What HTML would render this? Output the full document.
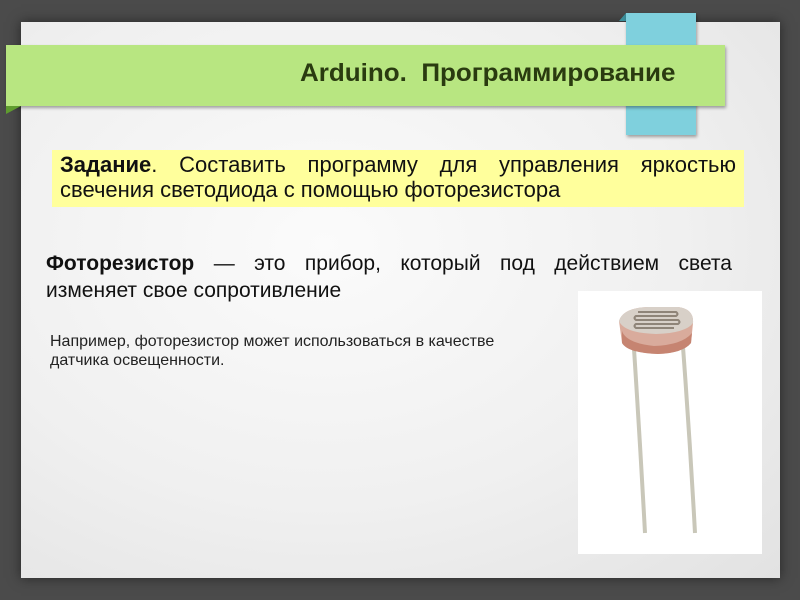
<!DOCTYPE html>
<html><head><meta charset="utf-8"><style>
body{margin:0;width:800px;height:600px;overflow:hidden;background:#4b4b4b;position:relative;font-family:"Liberation Sans",sans-serif}
.card{position:absolute;left:21px;top:22px;width:759px;height:556px;background:radial-gradient(ellipse at 40% 40%,#fbfbfb 0%,#f0f0f0 55%,#e2e2e2 100%);box-shadow:0 0 12px rgba(0,0,0,.5)}
.ribbon{position:absolute;left:626px;top:13px;width:70px;height:122px;background:#7fd0dd;box-shadow:1px 2px 3px rgba(0,0,0,.35)}
.ribfold{position:absolute;left:619px;top:13px;width:0;height:0;border-left:7px solid transparent;border-bottom:8px solid #3b8e9a}
.banner{position:absolute;left:6px;top:45px;width:719px;height:61px;background:#b8e681;box-shadow:1px 2px 3px rgba(0,0,0,.35)}
.bfold{position:absolute;left:6px;top:106px;width:0;height:0;border-left:15px solid #5f9c2f;border-bottom:8px solid transparent}
.title{position:absolute;left:300px;top:59px;font:bold 25px "Liberation Sans",sans-serif;color:#2a3b10;white-space:nowrap;transform-origin:0 0;transform:scaleX(1.04)}
.yellow{position:absolute;left:52px;top:150px;width:676px;height:57px;background:#ffff9c;padding:0 8px;font:22px/25px "Liberation Sans",sans-serif;color:#111}
.yellow .l{text-align:justify;text-align-last:justify;white-space:nowrap}
.yellow .l1{padding-top:2px}
.p1{position:absolute;left:46px;top:250px;width:686px;font:21px/27px "Liberation Sans",sans-serif;color:#111}
.p1 .l1{text-align:justify;text-align-last:justify}
.p2{position:absolute;left:50px;top:332px;font:16px/19px "Liberation Sans",sans-serif;color:#222}
.photo{position:absolute;left:578px;top:291px;width:184px;height:263px;background:#fff}
</style></head><body>
<div class="card"></div>
<div class="ribfold"></div>
<div class="ribbon"></div>
<div class="banner"></div>
<div class="bfold"></div>
<div class="title">Arduino.&nbsp; Программирование</div>
<div class="yellow"><div class="l l1"><b>Задание</b>. Составить программу для управления яркостью</div><div>свечения светодиода с помощью фоторезистора</div></div>
<div class="p1"><div class="l1"><b>Фоторезистор</b> — это прибор, который под действием света</div><div>изменяет свое сопротивление</div></div>
<div class="p2">Например, фоторезистор может использоваться в качестве<br>датчика освещенности.</div>
<div class="photo"><svg width="184" height="263" viewBox="0 0 184 263">
<path d="M56 58 Q62 150 67 242" stroke="#c9c7b9" stroke-width="4" fill="none"/>
<path d="M105 56 Q112 150 117 242" stroke="#c9c7b9" stroke-width="4" fill="none"/>
<path d="M41 30 Q45 17 70 16 L100 16 Q116 18 115 32 L113 52 Q105 62 80 63 Q50 62 44 52 Z" fill="#d9ab9c"/>
<path d="M44 40 Q48 52 76 55 Q104 54 114 42 L113 52 Q105 62 80 63 Q50 62 44 52Z" fill="#c07a66" opacity=".8"/>
<path d="M41 30 Q45 17 70 16 L100 16 Q116 18 115 32 Q108 42 78 43 Q46 42 41 30Z" fill="#d8d0c8"/>
<g stroke="#8f8478" stroke-width="2" fill="none"><path d="M60 21 H98 Q101 23 98 25 H58 Q55 27 58 29 H100 Q103 31 100 33 H58 Q55 35 58 37 H96"/></g>
</svg></div>
</body></html>
